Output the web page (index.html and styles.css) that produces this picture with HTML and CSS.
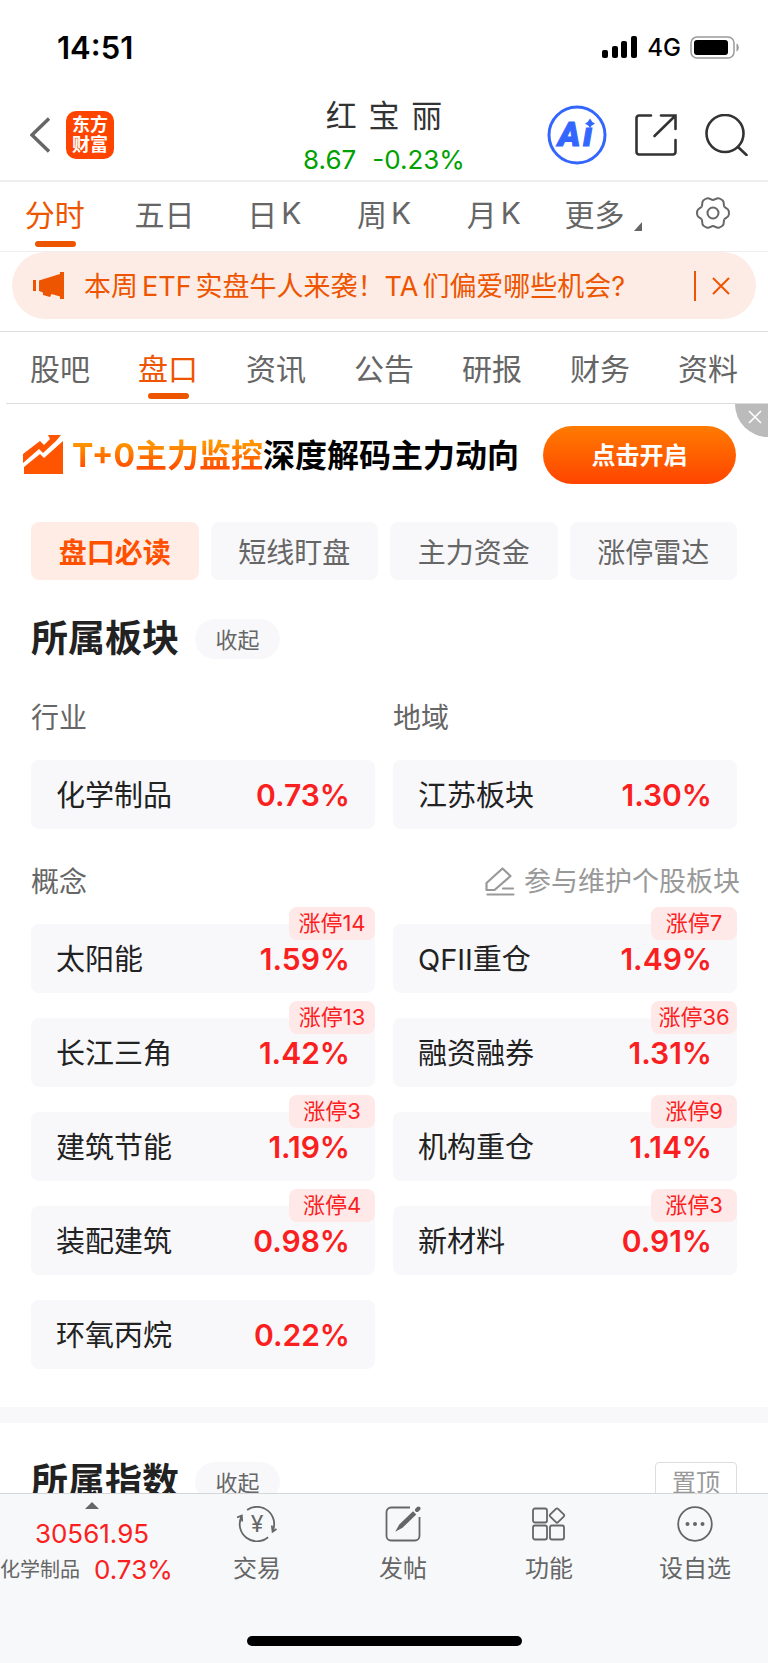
FILE: index.html
```
<!DOCTYPE html>
<html lang="zh-CN">
<head>
    <meta charset="UTF-8">
    <meta name="viewport" content="width=device-width, initial-scale=1">
    <title>红宝丽 8.67 -0.23%</title>
    <link rel="stylesheet" href="styles.css">
</head>
<body>
    <!-- Phone status bar -->
    <div class="status-bar">
        <span class="clock">14:51</span>
        <div class="status-icons">
            <svg width="36" height="23" viewBox="0 0 36 23">
                <rect x="0" y="14" width="6" height="8" rx="2"/>
                <rect x="10" y="10" width="6" height="12" rx="2"/>
                <rect x="19" y="5" width="6" height="17" rx="2"/>
                <rect x="29" y="0" width="6" height="22" rx="2"/>
            </svg>
            <span class="network">4G</span>
            <svg width="50" height="23" viewBox="0 0 50 23">
                <rect x="1" y="1" width="43" height="21" rx="6" fill="none" stroke="#999" stroke-width="1.5"/>
                <rect x="4" y="4" width="34" height="15" rx="3"/>
                <path d="M46.5 7.5c3 1 3 7 0 8z" fill="#999"/>
            </svg>
        </div>
    </div>

    <header class="header">
        <div class="header-left">
            <button class="icon-btn" aria-label="返回">
                <svg width="20" height="36" viewBox="0 0 20 36" fill="none" stroke="#666" stroke-width="3.4">
                    <path d="M19 1.5L2 18l17 16.5"/>
                </svg>
            </button>
            <a class="logo" href="#">东方<br>财富</a>
        </div>
        <div class="header-title">
            <h1>红 宝 丽</h1>
            <p class="price"><span>8.67</span><span>-0.23%</span></p>
        </div>
        <div class="header-right">
            <button class="icon-btn" aria-label="Ai">
                <svg width="60" height="60" viewBox="0 0 60 60">
                    <circle cx="30" cy="30" r="28" fill="none" stroke="#36f" stroke-width="3"/>
                    <text class="ai-text" x="11" y="41">A</text>
                    <text class="ai-text" x="36" y="41">ı</text>
                    <path d="M43 13.5q1.500 3.500 5 5q-3.500 1.500-5 5q-1.500-3.500-5-5q3.500-1.500 5-5z" fill="#36f"/>
                </svg>
            </button>
            <button class="icon-btn" aria-label="分享">
                <svg width="42" height="42" viewBox="0 0 42 42" fill="none" stroke="#333" stroke-width="2.6" stroke-linecap="round">
                    <path d="M16 1.5H4A2.5 2.5 0 0 0 1.5 4v34A2.5 2.5 0 0 0 4 40.5h34a2.5 2.5 0 0 0 2.5-2.500V26"/>
                    <path d="M26 1.500h14.500V15M40 2L19.500 22"/>
                </svg>
            </button>
            <button class="icon-btn" aria-label="搜索">
                <svg width="43" height="42" viewBox="0 0 43 42" fill="none" stroke="#333" stroke-width="2.6" stroke-linecap="round">
                    <circle cx="20" cy="19.5" r="18.5"/>
                    <path d="M33 33l8.5 8"/>
                </svg>
            </button>
        </div>
    </header>

    <!-- Chart period -->
    <nav class="tabs period-tabs">
        <a class="active" href="#">分时</a>
        <a href="#">五日</a>
        <a href="#">日<span class="latin">K</span></a>
        <a href="#">周<span class="latin">K</span></a>
        <a href="#">月<span class="latin">K</span></a>
        <a href="#">更多<i class="corner"></i></a>
        <a href="#" aria-label="设置">
            <svg width="34" height="34" viewBox="-17 -17 34 34" fill="none" stroke="#666" stroke-width="2">
                <path id="tooth" d="M11.2-6.5C12.2-4.8 15.4-4.5 15.7-2Q16.2 0 15.7 2C15.4 4.5 12.2 4.8 11.2 6.5"/>
                <use href="#tooth" transform="rotate(60)"/>
                <use href="#tooth" transform="rotate(120)"/>
                <use href="#tooth" transform="rotate(180)"/>
                <use href="#tooth" transform="rotate(240)"/>
                <use href="#tooth" transform="rotate(300)"/>
                <circle r="5.5"/>
            </svg>
        </a>
    </nav>

    <div class="notice-wrap">
        <div class="notice">
            <svg width="31" height="28" viewBox="0 0 31 28" fill="#ee5500">
                <path d="M0 8h3v11H0zM6 8.5L27 2V0h4v27h-4v-2.500L18.500 22 17 25l-7-2v-2.500L6 19z"/>
            </svg>
            <a class="notice-text" href="#">本周<span class="latin">ETF</span>实盘牛人来袭！<span>TA</span><span class="latin">们</span>偏爱哪些机会?</a>
            <button class="notice-close" aria-label="关闭">
                <svg width="18" height="18" viewBox="0 0 18 18" stroke="#ee5500" stroke-width="2">
                    <path d="M1 1l16 16M17 1L1 17"/>
                </svg>
            </button>
        </div>
    </div>

    <nav class="tabs info-tabs">
        <a href="#">股吧</a>
        <a class="active" href="#">盘口</a>
        <a href="#">资讯</a>
        <a href="#">公告</a>
        <a href="#">研报</a>
        <a href="#">财务</a>
        <a href="#">资料</a>
    </nav>

    <main class="content">
        <div class="promo">
            <svg width="40" height="40" viewBox="0 0 40 40" fill="#ff5500">
                <path d="M0 28v-9L17 6l4 4 6-6-2-4h13l-5 6-13 12-4-4zM1 39v-7l16-13 4 4L40 6v33z"/>
            </svg>
            <p class="promo-text"><span>T+0主力监控</span>深度解码主力动向</p>
            <button class="promo-btn">点击开启</button>
            <button class="promo-close" aria-label="关闭广告">
                <svg width="14" height="14" viewBox="0 0 14 14" stroke="#fff" stroke-width="1.6">
                    <path d="M1 1l12 12M13 1L1 13"/>
                </svg>
            </button>
        </div>

        <div class="chips">
            <button class="chip active">盘口必读</button>
            <button class="chip">短线盯盘</button>
            <button class="chip">主力资金</button>
            <button class="chip">涨停雷达</button>
        </div>

        <section class="section">
            <div class="section-head">
                <h2>所属板块</h2>
                <button class="fold">收起</button>
            </div>

            <div class="grid labels">
                <h3>行业</h3>
                <h3>地域</h3>
            </div>
            <div class="grid">
                <a class="card" href="#"><span>化学制品</span><b>0.73%</b></a>
                <a class="card" href="#"><span>江苏板块</span><b>1.30%</b></a>
            </div>

            <div class="label-row">
                <h3>概念</h3>
                <a class="maintain" href="#">
                    <svg width="30" height="30" viewBox="0 0 30 30" fill="none" stroke="#999" stroke-width="2.2" stroke-linejoin="round" stroke-linecap="round">
                        <path d="M1.5 23v-7L17.500 1.500l8 7.500L9.500 23zM18 21.500h10"/>
                        <path d="M2.5 27.500h26"/>
                    </svg>
                    参与维护个股板块
                </a>
            </div>
            <div class="grid">
                <a class="card" href="#"><span>太阳能</span><b>1.59%</b><em>涨停14</em></a>
                <a class="card" href="#"><span>QFII重仓</span><b>1.49%</b><em>涨停7</em></a>
                <a class="card" href="#"><span>长江三角</span><b>1.42%</b><em>涨停13</em></a>
                <a class="card" href="#"><span>融资融券</span><b>1.31%</b><em>涨停36</em></a>
                <a class="card" href="#"><span>建筑节能</span><b>1.19%</b><em>涨停3</em></a>
                <a class="card" href="#"><span>机构重仓</span><b>1.14%</b><em>涨停9</em></a>
                <a class="card" href="#"><span>装配建筑</span><b>0.98%</b><em>涨停4</em></a>
                <a class="card" href="#"><span>新材料</span><b>0.91%</b><em>涨停3</em></a>
                <a class="card" href="#"><span>环氧丙烷</span><b>0.22%</b></a>
            </div>
        </section>

        <section class="section">
            <div class="section-head">
                <h2>所属指数</h2>
                <button class="fold">收起</button>
                <button class="pin">置顶</button>
            </div>
        </section>
    </main>

    <footer class="bottom-bar">
        <div class="bar-items">
            <a class="index-box" href="#">
                <i class="up"></i>
                <span class="index-value">30561.95</span>
                <span class="index-row">化学制品 <b>0.73%</b></span>
            </a>
            <a class="bar-item" href="#">
                <svg width="40" height="36" viewBox="0 0 40 36" fill="none" stroke="#666" stroke-width="1.8">
                    <path d="M10.1 3.900A17.200 17.200 0 0 1 35.800 24.700M34.800 19.500l.8 6.200L39.500 23"/>
                    <path d="M31.1 31.200A17.200 17.200 0 0 1 4.400 10.700M0 11.500L4.800 9.500 5.200 15.500"/>
                    <text class="yuan" x="20" y="26">¥</text>
                </svg>
                <span>交易</span>
            </a>
            <a class="bar-item" href="#">
                <svg width="36" height="36" viewBox="0 0 36 36" fill="none" stroke="#666" stroke-width="1.8">
                    <path d="M25 1.5H6A4.5 4.5 0 0 0 1.500 6v24A4.500 4.500 0 0 0 6 34.500h24a4.500 4.500 0 0 0 4.500-4.500V11"/>
                    <path d="M28 6.5l2 2L17 21l-4.500 2.500L15 19z" fill="#666"/>
                    <path d="M32 4l1.500-1.500" stroke-width="4" stroke-linecap="round"/>
                </svg>
                <span>发帖</span>
            </a>
            <a class="bar-item" href="#">
                <svg width="34" height="36" viewBox="0 -1 34 36" fill="none" stroke="#666" stroke-width="1.8">
                    <rect x="1" y="1.5" width="14" height="14" rx="2"/>
                    <rect x="1" y="18.5" width="14" height="14" rx="2"/>
                    <rect x="18" y="18.5" width="14" height="14" rx="2"/>
                    <rect x="19.5" y="3" width="11" height="11" rx="1.5" transform="rotate(45 25 8.5)"/>
                </svg>
                <span>功能</span>
            </a>
            <a class="bar-item" href="#">
                <svg width="36" height="36" viewBox="0 0 36 36" fill="#666">
                    <circle cx="18" cy="18" r="16.8" fill="none" stroke="#666" stroke-width="1.8"/>
                    <circle cx="10.5" cy="18" r="2"/>
                    <circle cx="18" cy="18" r="2"/>
                    <circle cx="25.5" cy="18" r="2"/>
                </svg>
                <span>设自选</span>
            </a>
        </div>
        <div class="home-indicator"></div>
    </footer>
</body>
</html>
```

FILE: styles.css
```
* {
    box-sizing: border-box;
    margin: 0;
    padding: 0;
}
body {
    display: flex;
    flex-direction: column;
    height: 100vh;
    font-family: Inter, "Noto Sans CJK SC", sans-serif;
    background-color: #fff;
    color: #222;
}
a {
    color: inherit;
    text-decoration: none;
}
button {
    font-family: inherit;
    border: none;
    background: none;
    cursor: pointer;
}
svg {
    display: block;
    flex: none;
}
.status-bar {
    display: flex;
    flex: none;
    justify-content: space-between;
    align-items: center;
    height: 90px;
    padding: 4px 28px 0 57px;
    color: #000;
}
.clock {
    font-size: 31px;
    font-weight: 600;
}
.status-icons {
    display: flex;
    align-items: center;
    gap: 9px;
}
.network {
    font-size: 24px;
    font-weight: 500;
}

/* Header */
.header {
    display: grid;
    flex: none;
    grid-template-columns: 1fr auto 1fr;
    align-items: center;
    height: 92px;
    padding: 0 20px;
    border-bottom: 2px solid #eee;
}
.header-left {
    display: flex;
    align-items: center;
    gap: 16px;
    padding-left: 10px;
}
.logo {
    width: 48px;
    height: 48px;
    padding-top: 4px;
    border-radius: 10px;
    background-color: #ff4400;
    color: #fff;
    font-size: 18px;
    font-weight: 700;
    line-height: 20px;
    text-align: center;
}
.header-title {
    align-self: end;
    text-align: center;
}
.header-title h1 {
    color: #333;
    font-size: 31px;
    font-weight: 400;
    line-height: 48px;
    word-spacing: 3px;
}
.price {
    display: flex;
    justify-content: center;
    gap: 16px;
    color: #00a000;
    font-size: 26px;
    line-height: 40px;
}
.header-right {
    display: flex;
    justify-content: flex-end;
    align-items: center;
    gap: 28px;
}
.ai-text {
    fill: #3366ff;
    stroke: #3366ff;
    stroke-width: 1px;
    font-family: Roboto, sans-serif;
    font-size: 34px;
    font-style: italic;
    font-weight: 900;
}

/* Tabs */
.tabs {
    display: grid;
    flex: none;
    grid-template-columns: repeat(7, 1fr);
    color: #666;
    font-size: 30px;
}
.tabs a {
    position: relative;
    display: flex;
    justify-content: center;
    align-items: center;
    padding-bottom: 2px;
}
.tabs .active {
    color: #ee5500;
}
.tabs .active::after {
    content: '';
    position: absolute;
    bottom: 4px;
    left: 50%;
    width: 41px;
    height: 6px;
    margin-left: -20px;
    border-radius: 3px;
    background-color: #ee5500;
}
.latin {
    margin: 0 4px;
}
.tabs .latin {
    margin-right: 0;
}
.period-tabs {
    height: 70px;
    border-bottom: 1px solid #eee;
}
.period-tabs a {
    padding-bottom: 8px;
}
.corner {
    align-self: flex-end;
    margin: 0 0 12px 10px;
    border-bottom: 9px solid #666;
    border-left: 8px solid transparent;
}
.info-tabs {
    height: 72px;
    margin-left: 6px;
    padding-right: 6px;
    border-bottom: 1px solid #ddd;
}

/* Notice */
.notice-wrap {
    flex: none;
    padding: 0 12px 12px;
    border-bottom: 1px solid #ddd;
}
.notice {
    display: flex;
    align-items: center;
    height: 67px;
    padding: 0 26px 0 21px;
    border-radius: 34px;
    background-color: #fdece5;
    color: #ee5500;
}
.notice-text {
    flex: 1;
    margin-left: 20px;
    padding-bottom: 2px;
    font-size: 27px;
    white-space: nowrap;
}
.notice-text .latin + span + .latin {
    margin-right: 0;
}
.notice-close {
    padding: 6px 0 6px 16px;
    border-left: 2px solid #ee5500;
}

/* Scrolling area */
.content {
    flex: 1;
    min-height: 0;
    overflow-y: auto;
    scrollbar-width: none;
}
.promo {
    position: relative;
    display: flex;
    align-items: center;
    height: 102px;
    padding: 0 32px 0 23px;
}
.promo-text {
    flex: 1;
    margin-left: 9px;
    padding-bottom: 4px;
    color: #000;
    font-size: 32px;
    font-weight: 700;
    white-space: nowrap;
}
.promo-text span {
    background: linear-gradient(#ff9500 20%, #ff5000 80%);
    background-clip: text;
    color: transparent;
}
.promo-btn {
    width: 193px;
    height: 58px;
    padding-bottom: 4px;
    border-radius: 29px;
    background: linear-gradient(#ff7b00, #ff4400);
    color: #fff;
    font-size: 24px;
    font-weight: 700;
}
.promo-close {
    position: absolute;
    top: 0;
    right: 0;
    width: 33px;
    height: 33px;
    padding: 0 0 8px 13px;
    border-bottom-left-radius: 33px;
    background-color: #bbb;
}
.chips {
    display: grid;
    grid-template-columns: repeat(4, 1fr);
    gap: 12px;
    padding: 16px 31px 19px;
}
.chip {
    height: 58px;
    border-radius: 8px;
    background-color: #f8f8fb;
    color: #666;
    font-size: 28px;
}
.chip.active {
    background-color: #ffede5;
    color: #ff5000;
    font-weight: 600;
}
.section {
    padding: 20px 31px 38px;
}
.section + .section {
    padding-top: 39px;
    border-top: 16px solid #f8f8fb;
}
.section-head {
    display: flex;
    align-items: center;
    height: 40px;
}
.section-head h2 {
    font-size: 37px;
    font-weight: 600;
    line-height: 42px;
}
.fold {
    width: 85px;
    height: 40px;
    margin-left: 16px;
    padding-bottom: 3px;
    border-radius: 20px;
    background-color: #f8f8fb;
    color: #666;
    font-size: 22px;
}
.pin {
    width: 82px;
    height: 40px;
    margin-left: auto;
    padding-bottom: 3px;
    border: 1px solid #ddd;
    border-radius: 4px;
    color: #999;
    font-size: 24px;
}
.grid {
    display: grid;
    grid-template-columns: 1fr 1fr;
    gap: 25px 18px;
}
.labels {
    padding: 39px 0 22px;
}
h3 {
    color: #666;
    font-size: 28px;
    font-weight: 400;
    line-height: 40px;
}
.label-row {
    display: flex;
    justify-content: space-between;
    align-items: center;
    padding: 33px 0 22px;
}
.maintain {
    display: flex;
    align-items: center;
    gap: 9px;
    margin-right: -3px;
    color: #999;
    font-size: 27px;
    line-height: 40px;
}
.card {
    position: relative;
    display: flex;
    justify-content: space-between;
    align-items: center;
    height: 69px;
    padding: 0 25px;
    border-radius: 8px;
    background-color: #f8f8fb;
    font-size: 29px;
}
.card span {
    padding-bottom: 4px;
}
.card b {
    color: #fa2020;
    font-size: 30px;
    font-weight: 600;
}
.card em {
    position: absolute;
    top: -17px;
    right: 0;
    width: 86px;
    height: 33px;
    border-radius: 8px;
    background-color: #ffe8e8;
    color: #fa2020;
    font-size: 22px;
    font-style: normal;
    line-height: 33px;
    text-align: center;
}

/* Bottom bar */
.bottom-bar {
    flex: none;
    height: 170px;
    border-top: 1px solid #d5d6d8;
    background-color: #f7f8fa;
    color: #666;
}
.bar-items {
    display: grid;
    grid-template-columns: 184px repeat(4, 1fr);
    height: 142px;
}
.index-box {
    display: flex;
    flex-direction: column;
    align-items: center;
    padding-top: 8px;
}
.up {
    border-bottom: 7px solid #666;
    border-left: 7px solid transparent;
    border-right: 7px solid transparent;
}
.index-value {
    margin-top: 7px;
    color: #fa2020;
    font-size: 26px;
    line-height: 36px;
}
.index-row {
    display: flex;
    align-self: flex-start;
    align-items: center;
    gap: 14px;
    font-size: 20px;
    line-height: 36px;
}
.index-row b {
    color: #fa2020;
    font-size: 26px;
    font-weight: 400;
}
.bar-item {
    display: flex;
    flex-direction: column;
    align-items: center;
    gap: 9px;
    padding-top: 12px;
    font-size: 24px;
    line-height: 36px;
}
.yuan {
    fill: #666;
    stroke: none;
    font-size: 23px;
    text-anchor: middle;
}
.home-indicator {
    width: 275px;
    height: 10px;
    margin: 0 auto;
    border-radius: 5px;
    background-color: #000;
}
```
